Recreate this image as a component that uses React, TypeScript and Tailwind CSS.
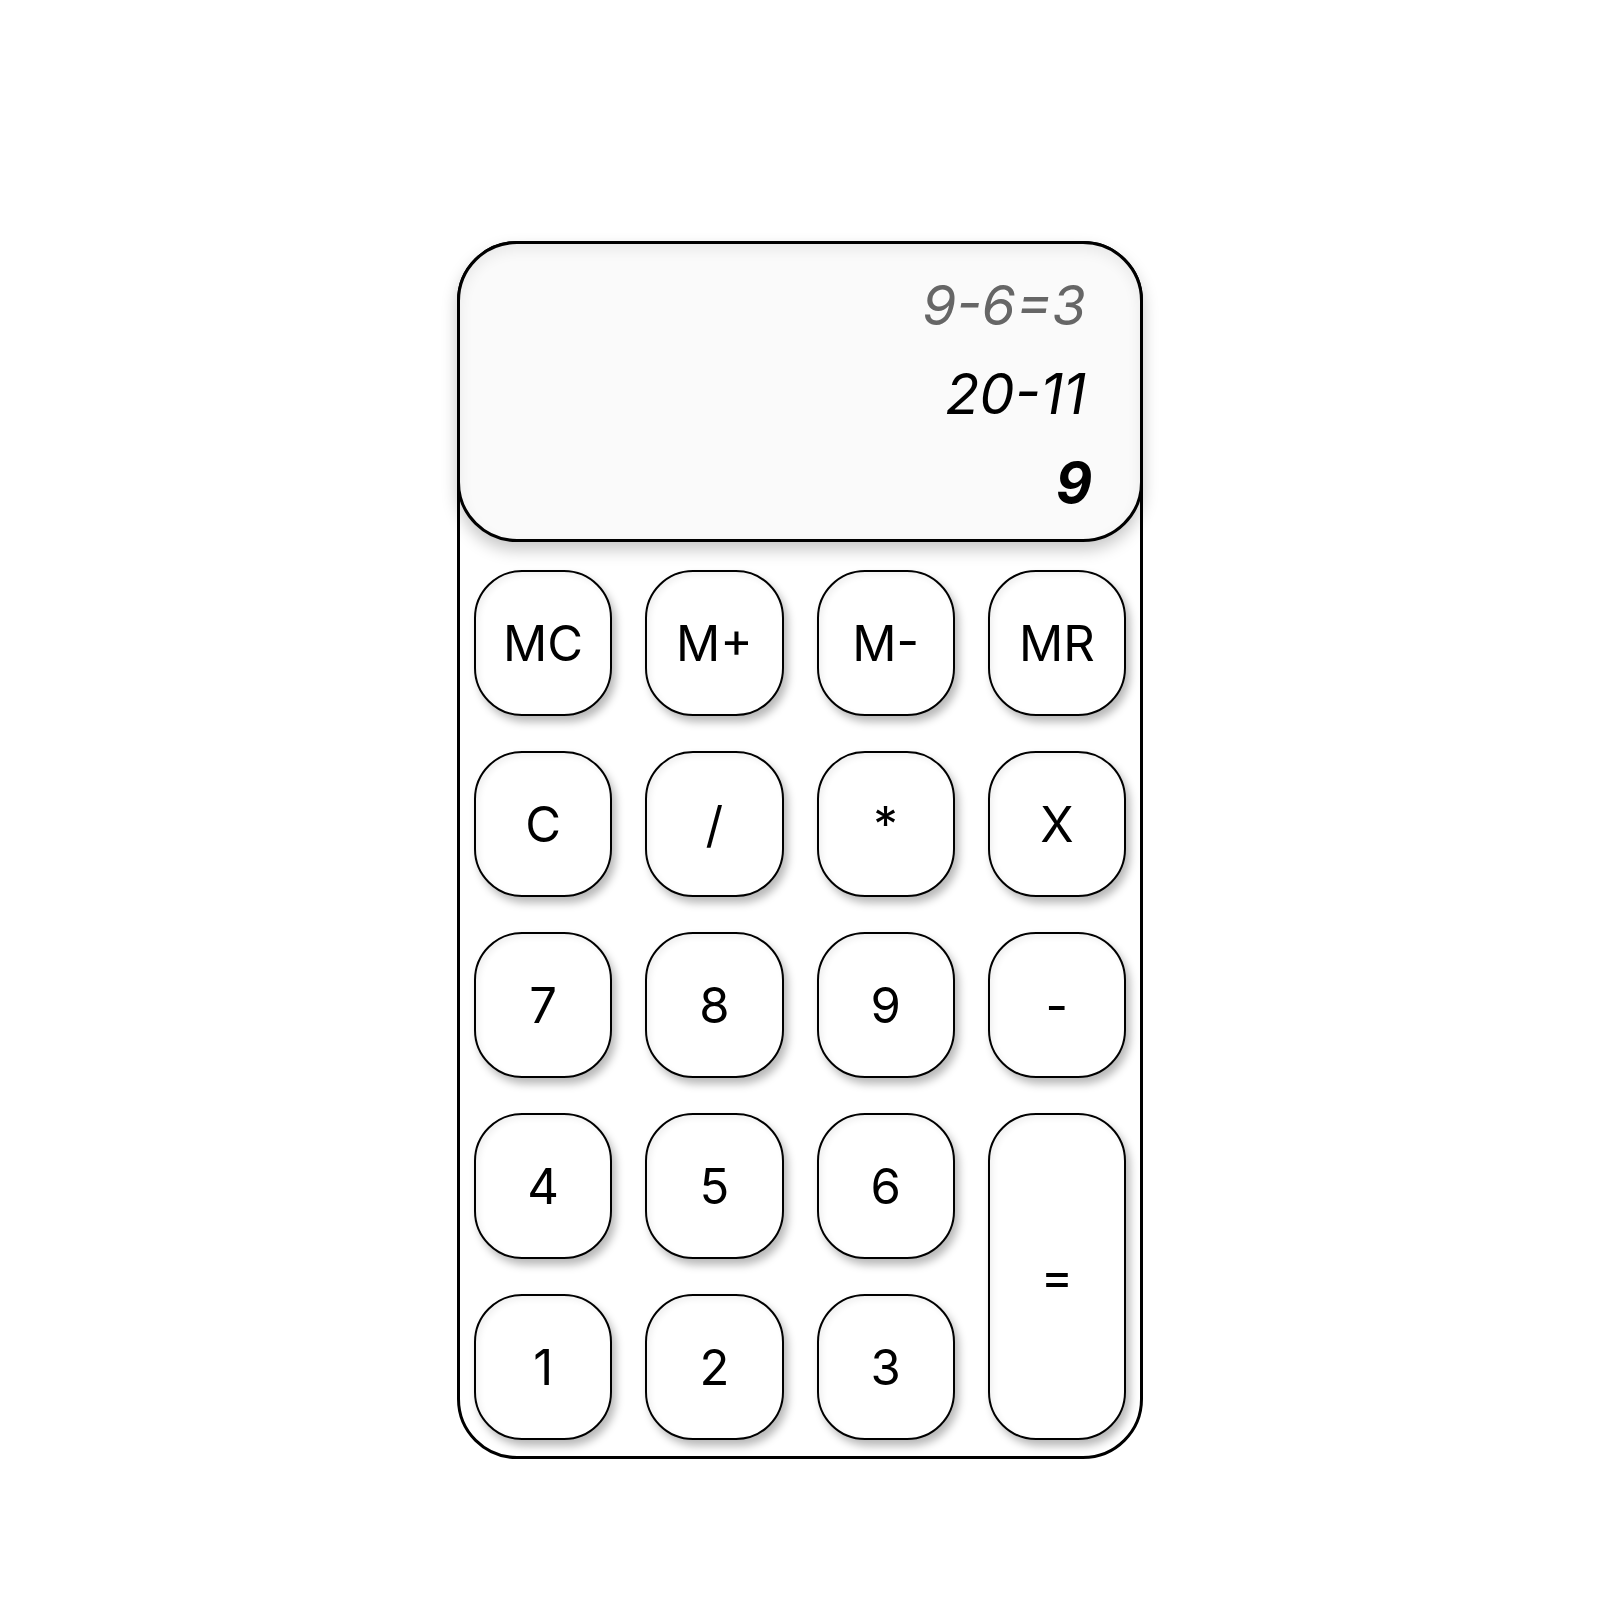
import React from "react";

const keys: { label: string; tall?: boolean }[] = [
  { label: "MC" },
  { label: "M+" },
  { label: "M-" },
  { label: "MR" },
  { label: "C" },
  { label: "/" },
  { label: "*" },
  { label: "X" },
  { label: "7" },
  { label: "8" },
  { label: "9" },
  { label: "-" },
  { label: "4" },
  { label: "5" },
  { label: "6" },
  { label: "=", tall: true },
  { label: "1" },
  { label: "2" },
  { label: "3" },
];

const font = { fontFamily: 'Inter, "Liberation Sans", Arial, sans-serif' };

function Key({ label, tall }: { label: string; tall?: boolean }) {
  return (
    <button
      className={`${
        tall ? "row-span-2" : ""
      } flex items-center justify-center rounded-[48px] border-2 border-black bg-white text-[49px] leading-none text-black shadow-[4px_6px_8px_rgba(0,0,0,0.28),inset_3px_3px_6px_rgba(0,0,0,0.06)]`}
      style={font}
    >
      {label}
    </button>
  );
}

export default function App() {
  return (
    <div className="min-h-[1600px] w-full bg-white pt-[241px]">
      <div
        className="mx-auto flex h-[1218px] w-[686px] flex-col rounded-[60px] border-[3px] border-black bg-white"
        style={font}
      >
        {/* Display */}
        <div className="relative z-10 m-[-3px] flex h-[301px] flex-col items-end rounded-[60px] border-[3px] border-black bg-[#fafafa] pr-[54px] pt-[17px] shadow-[0_8px_16px_rgba(0,0,0,0.22),inset_0_6px_14px_rgba(0,0,0,0.07)]">
          <div className="text-[55px] italic leading-[89px] text-[#666666]">9-6=3</div>
          <div className="text-[56px] italic leading-[89px] text-black">20-11</div>
          <div className="-mr-[6px] text-[56px] font-bold italic leading-[89px] text-black">9</div>
        </div>

        {/* Keypad */}
        <div className="mt-[31px] grid grid-cols-4 grid-rows-[repeat(5,146px)] gap-x-[33px] gap-y-[35px] px-[14px]">
          {keys.map((k) => (
            <Key key={k.label} label={k.label} tall={k.tall} />
          ))}
        </div>
      </div>
    </div>
  );
}
